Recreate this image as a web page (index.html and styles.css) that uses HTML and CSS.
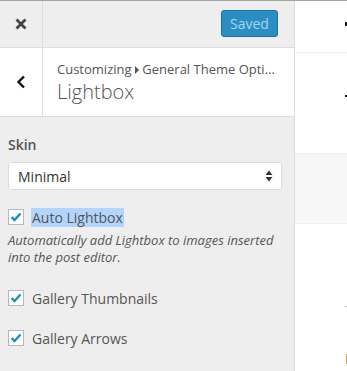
FILE: index.html
```html
<!DOCTYPE html>
<html lang="en">
<head>
  <meta charset="UTF-8" />
  <title>Customize: Lightbox</title>
  <link rel="stylesheet" href="styles.css">
</head>
<body>
  <div class="page">
    <div class="sidebar">

      <!-- Header with close + save state -->
      <div class="header">
        <div class="close">
          <svg width="12" height="12" viewBox="0 0 12 12">
            <path d="M1.5 1.5 L10.5 10.5 M10.5 1.5 L1.5 10.5" stroke="#444" stroke-width="2.8" stroke-linecap="butt" />
          </svg>
        </div>
        <button class="saved" disabled>Saved</button>
      </div>

      <!-- Section title -->
      <div class="section-title">
        <div class="back">
          <svg width="10" height="14" viewBox="0 0 10 14">
            <path d="M8 1.5 L2.5 7 L8 12.5" fill="none" stroke="#111" stroke-width="2.4" />
          </svg>
        </div>
        <div class="titles">
          <div class="crumbs">Customizing <span class="arrow"></span> General Theme Opti…</div>
          <div class="title">Lightbox</div>
        </div>
      </div>

      <!-- Controls -->
      <div class="controls">
        <div class="control-title">Skin</div>
        <div class="select">
          <span>Minimal</span>
          <svg width="8" height="12" viewBox="0 0 8 12">
            <path d="M4 0.5 L7.5 5 L0.5 5 Z M4 11.5 L7.5 7 L0.5 7 Z" fill="#333" />
          </svg>
        </div>

        <label class="check first">
          <span class="box"><svg width="14" height="12" viewBox="0 0 14 12"><path d="M2.5 6 L5.5 9 L11.5 2.5" fill="none" stroke="#1e8cbe" stroke-width="2.4" /></svg></span>
          <span class="label-text selected">Auto Lightbox</span>
        </label>
        <div class="description">Automatically add Lightbox to images inserted into the post editor.</div>

        <label class="check gap-lg">
          <span class="box"><svg width="14" height="12" viewBox="0 0 14 12"><path d="M2.5 6 L5.5 9 L11.5 2.5" fill="none" stroke="#1e8cbe" stroke-width="2.4" /></svg></span>
          <span class="label-text">Gallery Thumbnails</span>
        </label>

        <label class="check gap-md">
          <span class="box"><svg width="14" height="12" viewBox="0 0 14 12"><path d="M2.5 6 L5.5 9 L11.5 2.5" fill="none" stroke="#1e8cbe" stroke-width="2.4" /></svg></span>
          <span class="label-text">Gallery Arrows</span>
        </label>
      </div>
    </div>

    <!-- Preview pane (cut off) -->
    <div class="preview">
      <div class="row row-top"><span class="dot"></span></div>
      <div class="row row-mid"><span class="dot"></span></div>
      <div class="row row-band"></div>
      <div class="row row-low"><span class="tick"></span></div>
      <div class="row row-bottom"><span class="orange"></span></div>
    </div>
  </div>
</body>
</html>
```

FILE: styles.css
```css
body {
  margin: 0;
  font-family: "Open Sans", "Noto Sans", sans-serif;
  color: #555;
  background: #fff;
}

.page {
  display: flex;
  height: 371px;
  border-top: 1px solid #a4a4a4;
  box-sizing: border-box;
  overflow: hidden;
}

.sidebar {
  width: 294px;
  flex-shrink: 0;
  background-color: #eee;
  border-right: 1px solid #ddd;
}

.header {
  display: flex;
  align-items: center;
  height: 46px;
  border-bottom: 1px solid #ddd;
}

.close {
  width: 42px;
  height: 46px;
  border-right: 1px solid #ddd;
  display: flex;
  align-items: center;
  justify-content: center;
}

.saved {
  margin-left: auto;
  margin-right: 16px;
  margin-top: -1px;
  width: 57px;
  height: 27px;
  padding: 0;
  font-family: inherit;
  font-size: 14px;
  color: #a9d5ed;
  background-color: #2b8ec3;
  border: 1px solid #1f6f9a;
  border-radius: 3px;
}

.section-title {
  display: flex;
  height: 68px;
  background-color: #fff;
  border-bottom: 1px solid #ddd;
}

.back {
  width: 42px;
  border-right: 1px solid #ddd;
  display: flex;
  align-items: center;
  justify-content: center;
}

.titles {
  flex: 1;
  min-width: 0;
  padding: 11px 10px 0 14px;
}

.crumbs {
  font-size: 13px;
  line-height: 20px;
  white-space: nowrap;
}

.arrow {
  display: inline-block;
  width: 0;
  height: 0;
  border-top: 4px solid transparent;
  border-bottom: 4px solid transparent;
  border-left: 4px solid #555;
  vertical-align: 0;
}

.title {
  font-size: 20px;
  font-weight: 300;
  line-height: 26px;
}

.controls {
  padding: 18px 12px 0 8px;
}

.control-title {
  font-size: 14px;
  font-weight: 600;
  line-height: 20px;
}

.select {
  margin-top: 7px;
  height: 26px;
  padding: 0 8px 0 9px;
  background-color: #fff;
  border: 1px solid #ddd;
  border-radius: 3px;
  display: flex;
  align-items: center;
  justify-content: space-between;
  font-size: 14px;
  color: #333;
}

.check {
  display: flex;
  align-items: center;
  gap: 8px;
  height: 20px;
  font-size: 14px;
}

.check.first {
  margin-top: 17px;
}

.check.gap-lg {
  margin-top: 22px;
}

.check.gap-md {
  margin-top: 20px;
}

.box {
  width: 14px;
  height: 14px;
  background-color: #fff;
  border: 1px solid #b4b9be;
  display: flex;
  align-items: center;
  justify-content: center;
}

.label-text.selected {
  background-color: #b3d4fc;
  padding: 0 1px;
  margin-left: -1px;
}

.description {
  margin-top: 5px;
  font-size: 13px;
  font-style: italic;
  line-height: 17px;
}

.preview {
  flex: 1;
  position: relative;
  background-color: #fff;
}

.row {
  position: relative;
}

.row-top {
  height: 51px;
  border-bottom: 1px solid #eee;
}

.row-mid {
  height: 100px;
}

.row-band {
  height: 69px;
  background-color: #f7f7f7;
  border-top: 1px solid #eee;
  border-bottom: 1px solid #eee;
}

.row-low {
  height: 80px;
}

.row-bottom {
  height: 68px;
}

.dot {
  position: absolute;
  right: 0;
  width: 2px;
  height: 4px;
  background-color: #111;
}

.row-top .dot {
  top: 21px;
}

.row-mid .dot {
  top: 42px;
  height: 2px;
}

.tick {
  position: absolute;
  right: 0;
  top: 82px;
  width: 2px;
  height: 1px;
  background-color: #bbb;
}

.orange {
  position: absolute;
  right: 0;
  top: 50px;
  width: 1px;
  height: 10px;
  background-color: #e39a5a;
}
```
